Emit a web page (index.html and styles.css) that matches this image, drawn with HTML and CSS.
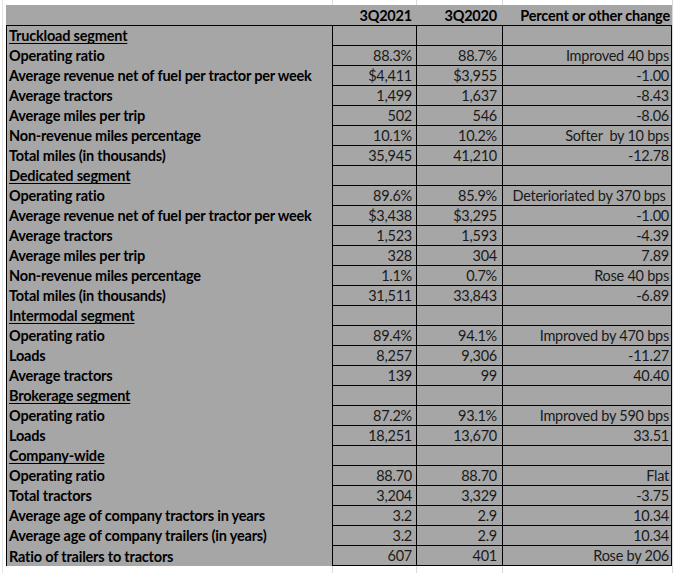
FILE: index.html
```html
<!DOCTYPE html>
<html lang="en">
<head>
<meta charset="utf-8">
<title>Segment statistics</title>
<link rel="stylesheet" href="styles.css">
</head>
<body>
<div class="sheet">
<table class="stats">
<colgroup>
<col class="c-label"><col class="c-a"><col class="c-b"><col class="c-c">
</colgroup>
<thead>
<tr class="head"><th class="label"></th><th class="a">3Q2021</th><th class="b">3Q2020</th><th class="c">Percent or other change</th></tr>
</thead>
<tbody>
<tr class="first"><td class="label"><u>Truckload segment</u></td><td class="a"></td><td class="b"></td><td class="c"></td></tr>
<tr><td class="label">Operating ratio</td><td class="a">88.3%</td><td class="b">88.7%</td><td class="c">Improved 40 bps</td></tr>
<tr><td class="label">Average revenue net of fuel per tractor per week</td><td class="a">$4,411</td><td class="b">$3,955</td><td class="c">-1.00</td></tr>
<tr><td class="label">Average tractors</td><td class="a">1,499</td><td class="b">1,637</td><td class="c">-8.43</td></tr>
<tr><td class="label">Average miles per trip</td><td class="a">502</td><td class="b">546</td><td class="c">-8.06</td></tr>
<tr><td class="label">Non-revenue miles percentage</td><td class="a">10.1%</td><td class="b">10.2%</td><td class="c">Softer  by 10 bps</td></tr>
<tr><td class="label">Total miles (in thousands)</td><td class="a">35,945</td><td class="b">41,210</td><td class="c">-12.78</td></tr>
<tr><td class="label"><u>Dedicated segment</u></td><td class="a"></td><td class="b"></td><td class="c"></td></tr>
<tr><td class="label">Operating ratio</td><td class="a">89.6%</td><td class="b">85.9%</td><td class="c">Deterioriated by 370 bps </td></tr>
<tr><td class="label">Average revenue net of fuel per tractor per week</td><td class="a">$3,438</td><td class="b">$3,295</td><td class="c">-1.00</td></tr>
<tr><td class="label">Average tractors</td><td class="a">1,523</td><td class="b">1,593</td><td class="c">-4.39</td></tr>
<tr><td class="label">Average miles per trip</td><td class="a">328</td><td class="b">304</td><td class="c">7.89</td></tr>
<tr><td class="label">Non-revenue miles percentage</td><td class="a">1.1%</td><td class="b">0.7%</td><td class="c">Rose 40 bps</td></tr>
<tr><td class="label">Total miles (in thousands)</td><td class="a">31,511</td><td class="b">33,843</td><td class="c">-6.89</td></tr>
<tr><td class="label"><u>Intermodal segment</u></td><td class="a"></td><td class="b"></td><td class="c"></td></tr>
<tr><td class="label">Operating ratio</td><td class="a">89.4%</td><td class="b">94.1%</td><td class="c">Improved by 470 bps</td></tr>
<tr><td class="label">Loads</td><td class="a">8,257</td><td class="b">9,306</td><td class="c">-11.27</td></tr>
<tr><td class="label">Average tractors</td><td class="a">139</td><td class="b">99</td><td class="c">40.40</td></tr>
<tr><td class="label"><u>Brokerage segment</u></td><td class="a"></td><td class="b"></td><td class="c"></td></tr>
<tr><td class="label">Operating ratio</td><td class="a">87.2%</td><td class="b">93.1%</td><td class="c">Improved by 590 bps</td></tr>
<tr><td class="label">Loads</td><td class="a">18,251</td><td class="b">13,670</td><td class="c">33.51</td></tr>
<tr><td class="label"><u>Company-wide</u></td><td class="a"></td><td class="b"></td><td class="c"></td></tr>
<tr><td class="label">Operating ratio</td><td class="a">88.70</td><td class="b">88.70</td><td class="c">Flat</td></tr>
<tr><td class="label">Total tractors</td><td class="a">3,204</td><td class="b">3,329</td><td class="c">-3.75</td></tr>
<tr><td class="label">Average age of company tractors in years</td><td class="a">3.2</td><td class="b">2.9</td><td class="c">10.34</td></tr>
<tr><td class="label">Average age of company trailers (in years)</td><td class="a">3.2</td><td class="b">2.9</td><td class="c">10.34</td></tr>
<tr class="last"><td class="label">Ratio of trailers to tractors</td><td class="a">607</td><td class="b">401</td><td class="c">Rose by 206</td></tr>
</tbody>
</table>
</div>
</body>
</html>
```
FILE: styles.css
```css
html, body {
  margin: 0;
  padding: 0;
}
body {
  background-color: #ffffff;
  background-image:
    linear-gradient(to right, transparent 332px, #dadada 332px, #dadada 333px, transparent 333px),
    linear-gradient(to right, transparent 416px, #dadada 416px, #dadada 417px, transparent 417px),
    linear-gradient(to right, transparent 502px, #dadada 502px, #dadada 503px, transparent 503px),
    linear-gradient(to right, transparent 672px, #dadada 672px, #dadada 673px, transparent 673px),
    linear-gradient(to right, transparent 2px, #e4e4e4 2px, #e4e4e4 3px, transparent 3px);
  height: 573px;
  font-family: Lato, "Liberation Sans", sans-serif;
  font-size: 14.5px;
  color: #111111;
}
.sheet {
  padding: 5px 0 0 6px;
}
.stats {
  border-collapse: separate;
  border-spacing: 0;
  table-layout: fixed;
  width: 666px;
  background: #a6a6a6;
}
.c-label { width: 326px; }
.c-a { width: 84px; }
.c-b { width: 86px; }
.c-c { width: 170px; }
.stats th,
.stats td {
  box-sizing: border-box;
  height: 20px;
  padding: 0;
  line-height: 16px;
  vertical-align: bottom;
  padding-bottom: 1px;
  white-space: pre;
  overflow: visible;
}
.stats th {
  font-weight: 700;
  text-align: right;
  color: #000;
  letter-spacing: -0.2px;
}
.stats td.label {
  font-weight: 700;
  color: #000;
  text-align: left;
  padding-left: 2px;
  border-left: 1px solid #000;
  letter-spacing: -0.2px;
}
.stats td.a,
.stats td.b,
.stats td.c {
  text-align: right;
  border-top: 1px solid #000;
  border-left: 1px solid #000;
  font-weight: 400;
  color: #1a1a1a;
  letter-spacing: -0.25px;
}
.stats .a { padding-right: 4px; }
.stats .b { padding-right: 5px; }
.stats .c { padding-right: 2px; }
.stats td.c { border-right: 1px solid #000; }
.stats tr.first td.label { border-top: 1px solid #000; }
.stats tr.last td.a,
.stats tr.last td.b,
.stats tr.last td.c { border-bottom: 1px solid #000; }
.stats tr.last td { height: 21px; }
.stats u {
  text-decoration: underline;
  text-decoration-thickness: 1px;
  text-underline-offset: 2px;
}
```
